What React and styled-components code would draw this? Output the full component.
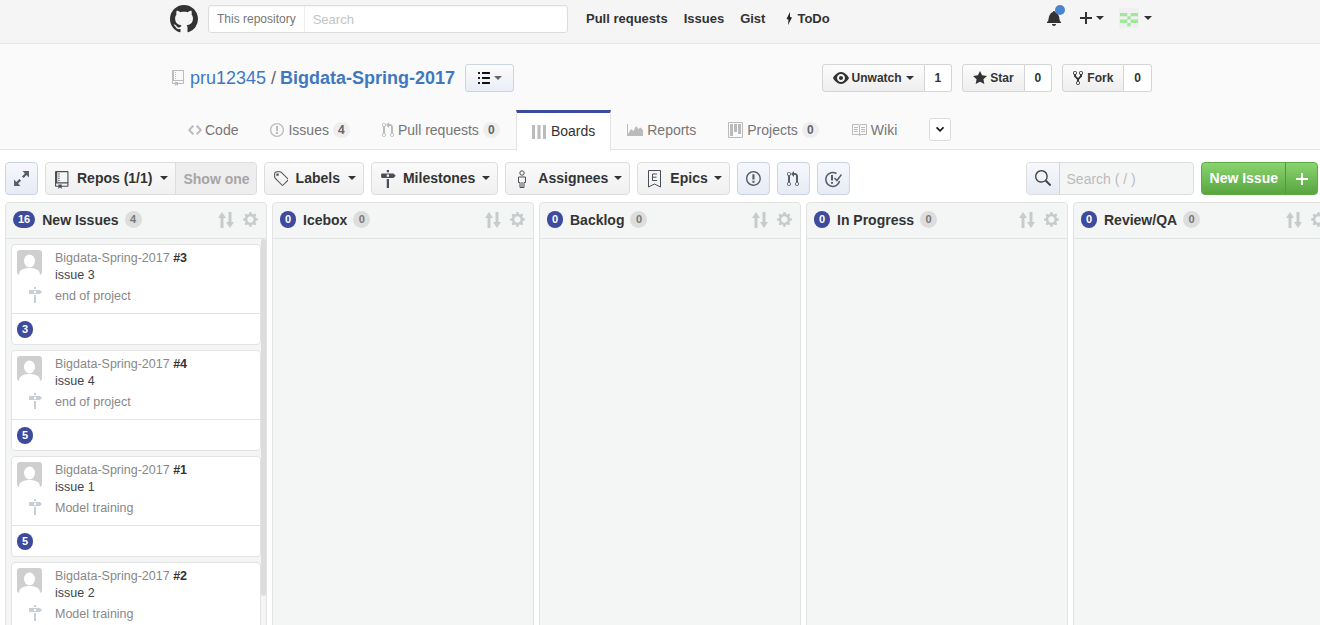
import React from "react";
import styled, { createGlobalStyle } from "styled-components";

const GlobalStyle = createGlobalStyle`
  html, body {
    margin: 0;
    height: 100%;
    overflow: hidden;
    background: #fff;
    font-family: "Liberation Sans", Arial, sans-serif;
    font-size: 14px;
    color: #333;
  }
  * { box-sizing: border-box; }
`;

const Oct = ({ d, w = 16, size = 16, color = "currentColor" }) => (
  <svg width={(w / 16) * size} height={size} viewBox={`0 0 ${w} 16`} fill={color} style={{ flex: "none", display: "block" }}>
    <path fillRule="evenodd" d={d} />
  </svg>
);

const P = {
  github: "M8 0C3.58 0 0 3.58 0 8c0 3.54 2.29 6.53 5.47 7.59.4.07.55-.17.55-.38 0-.19-.01-.82-.01-1.49-2.01.37-2.53-.49-2.69-.94-.09-.23-.48-.94-.82-1.13-.28-.15-.68-.52-.01-.53.63-.01 1.08.58 1.23.82.72 1.21 1.87.87 2.33.66.07-.52.28-.87.51-1.07-1.78-.2-3.64-.89-3.64-3.95 0-.87.31-1.59.82-2.15-.08-.2-.36-1.02.08-2.12 0 0 .67-.21 2.2.82.64-.18 1.32-.27 2-.27.68 0 1.36.09 2 .27 1.53-1.04 2.2-.82 2.2-.82.44 1.1.16 1.92.08 2.12.51.56.82 1.27.82 2.15 0 3.07-1.87 3.75-3.65 3.95.29.25.54.73.54 1.48 0 1.07-.01 1.93-.01 2.2 0 .21.15.46.55.38A8.013 8.013 0 0 0 16 8c0-4.42-3.58-8-8-8z",
  repo: "M4 9H3V8h1v1zm0-3H3v1h1V6zm0-2H3v1h1V4zm0-2H3v1h1V2zm8-1v12c0 .55-.45 1-1 1H6v2l-1.5-1.5L3 16v-2H1c-.55 0-1-.45-1-1V1c0-.55.45-1 1-1h10c.55 0 1 .45 1 1zm-1 10H1v2h2v-1h3v1h5v-2zm0-10H2v9h9V1z",
  eye: "M8.06 2C3 2 0 8 0 8s3 6 8.06 6C13 14 16 8 16 8s-3-6-7.94-6zM8 12c-2.2 0-4-1.78-4-4 0-2.2 1.8-4 4-4 2.22 0 4 1.8 4 4 0 2.22-1.78 4-4 4zm2-4c0 1.11-.89 2-2 2-1.11 0-2-.89-2-2 0-1.11.89-2 2-2 1.11 0 2 .89 2 2z",
  star: "M14 6l-4.9-.64L7 1 4.9 5.36 0 6l3.6 3.26L2.67 14 7 11.67 11.33 14l-.93-4.74L14 6z",
  fork: "M8 1a1.993 1.993 0 0 0-1 3.72V6L5 8 3 6V4.72A1.993 1.993 0 0 0 2 1a1.993 1.993 0 0 0-1 3.72V6.5l3 3v1.78A1.993 1.993 0 0 0 5 15a1.993 1.993 0 0 0 1-3.72V9.5l3-3V4.72A1.993 1.993 0 0 0 8 1zM2 4.2C1.34 4.2.8 3.65.8 3c0-.65.55-1.2 1.2-1.2.65 0 1.2.55 1.2 1.2 0 .65-.55 1.2-1.2 1.2zm3 10c-.66 0-1.2-.55-1.2-1.2 0-.65.55-1.2 1.2-1.2.65 0 1.2.55 1.2 1.2 0 .65-.55 1.2-1.2 1.2zm3-10c-.66 0-1.2-.55-1.2-1.2 0-.65.55-1.2 1.2-1.2.65 0 1.2.55 1.2 1.2 0 .65-.55 1.2-1.2 1.2z",
  code: "M9.5 3L8 4.5 11.5 8 8 11.5 9.5 13 14 8 9.5 3zm-5 0L0 8l4.5 5L6 11.5 2.5 8 6 4.5 4.5 3z",
  issue: "M7 2.3c3.14 0 5.7 2.56 5.7 5.7s-2.56 5.7-5.7 5.7A5.71 5.71 0 0 1 1.3 8c0-3.14 2.56-5.7 5.7-5.7zM7 1C3.14 1 0 4.14 0 8s3.14 7 7 7 7-3.14 7-7-3.14-7-7-7zm1 3H6v5h2V4zm0 6H6v2h2v-2z",
  pull: "M11 11.28V5c-.03-.78-.34-1.47-.94-2.06C9.46 2.35 8.78 2.03 8 2H7V0L4 3l3 3V4h1c.27.02.48.11.69.31.21.2.3.42.31.69v6.28A1.993 1.993 0 0 0 10 15a1.993 1.993 0 0 0 1-3.72zm-1 2.92c-.66 0-1.2-.55-1.2-1.2 0-.65.55-1.2 1.2-1.2.65 0 1.2.55 1.2 1.2 0 .65-.55 1.2-1.2 1.2zM4 3c0-1.11-.89-2-2-2a1.993 1.993 0 0 0-1 3.72v6.56A1.993 1.993 0 0 0 2 15a1.993 1.993 0 0 0 1-3.72V4.72c.59-.34 1-.98 1-1.72zm-.8 10c0 .66-.55 1.2-1.2 1.2-.65 0-1.2-.55-1.2-1.2 0-.65.55-1.2 1.2-1.2.65 0 1.2.55 1.2 1.2zM2 4.2C1.34 4.2.8 3.65.8 3c0-.65.55-1.2 1.2-1.2.65 0 1.2.55 1.2 1.2 0 .65-.55 1.2-1.2 1.2z",
  project: "M10 12h3V2h-3v10zm-4-2h3V2H6v8zm-4 4h3V2H2v12zm-1 1h13V1H1v14zM14 0H1a1 1 0 0 0-1 1v14a1 1 0 0 0 1 1h13a1 1 0 0 0 1-1V1a1 1 0 0 0-1-1z",
  bars: "M0 2h3v14H0zM5.500 2h3v14h-3zM11 2h3v14h-3z",
  book: "M3 5h4v1H3V5zm0 3h4V7H3v1zm0 2h4V9H3v1zm11-5h-4v1h4V5zm0 2h-4v1h4V7zm0 2h-4v1h4V9zm2-6v9c0 .55-.45 1-1 1H9.5l-1 1-1-1H2c-.55 0-1-.45-1-1V3c0-.55.45-1 1-1h5.500l1 1 1-1H15c.55 0 1 .45 1 1zm-8 .5L7.5 3H2v9h6V3.5zm7-.5H9.5l-.5.5V12h6V3z",
  reports: "M0 2h1v10l3-5 2.500 2L9 4l2.500 3 2-1.500L16 8v6H0z",
  milestone: "M8 2H6V0h2v2zm4 5H2c-.55 0-1-.45-1-1V4c0-.55.45-1 1-1h10l2 2-2 2zM8 4H6v2h2V4zM6 16h2V8H6v8z",
  tag: "M7.73 1.73C7.26 1.26 6.62 1 5.96 1H3.5C2.13 1 1 2.13 1 3.5v2.47c0 .66.27 1.3.73 1.77l6.06 6.06c.39.39 1.02.39 1.41 0l4.59-4.59a.996.996 0 0 0 0-1.41L7.73 1.73zM2.38 7.09c-.31-.3-.47-.7-.47-1.13V3.5c0-.88.72-1.59 1.59-1.59h2.47c.42 0 .83.16 1.13.47l6.14 6.13-4.73 4.73-6.13-6.15zM3.01 3h2v2H3V3h.01z",
  bell: "M14 12v1H0v-1l.73-.58c.77-.77.81-2.55 1.19-4.42C2.69 3.23 6 2 6 2c0-.55.45-1 1-1s1 .45 1 1c0 0 3.39 1.23 4.16 5 .38 1.88.42 3.66 1.19 4.42l.66.58H14zm-7 4c1.11 0 2-.89 2-2H5c0 1.11.89 2 2 2z",
  plus: "M12 9H7v5H5V9H0V7h5V2h2v5h5v2z",
  list: "M2 13c0 .59 0 1-.59 1H.59C0 14 0 13.59 0 13c0-.59 0-1 .59-1h.81c.59 0 .59.41.59 1H2zm2.59-9h6.81c.59 0 .59-.41.59-1 0-.59 0-1-.59-1H4.59C4 2 4 2.41 4 3c0 .59 0 1 .59 1zM1.41 7H.59C0 7 0 7.41 0 8c0 .59 0 1 .59 1h.81c.59 0 .59-.41.59-1 0-.59 0-1-.59-1h.01zm0-5H.59C0 2 0 2.41 0 3c0 .59 0 1 .59 1h.81c.59 0 .59-.41.59-1 0-.59 0-1-.59-1h.01zm10 5H4.59C4 7 4 7.41 4 8c0 .59 0 1 .59 1h6.81c.59 0 .59-.41.59-1 0-.59 0-1-.59-1h.01zm0 5H4.59C4 12 4 12.41 4 13c0 .59 0 1 .59 1h6.81c.59 0 .59-.41.59-1 0-.59 0-1-.59-1h.01z",
  gear: "M14 8.77v-1.6l-1.94-.64-.45-1.09.88-1.84-1.13-1.13-1.81.91-1.09-.45-.69-1.92h-1.6l-.63 1.94-1.11.45-1.84-.88-1.13 1.13.91 1.81-.45 1.09L0 7.23v1.59l1.94.64.45 1.09-.88 1.84 1.13 1.13 1.81-.91 1.09.45.69 1.92h1.59l.63-1.94 1.11-.45 1.84.88 1.13-1.13-.92-1.81.47-1.09L14 8.75v.02zM7 11c-1.66 0-3-1.34-3-3s1.34-3 3-3 3 1.34 3 3-1.34 3-3 3z",
  search: "M15.7 13.3l-3.81-3.83A5.93 5.93 0 0 0 13 6c0-3.31-2.69-6-6-6S1 2.69 1 6s2.69 6 6 6c1.3 0 2.48-.41 3.47-1.11l3.83 3.81c.19.2.45.3.7.3.25 0 .52-.09.7-.3a.996.996 0 0 0 0-1.41v.01zM7 10.7c-2.59 0-4.7-2.11-4.7-4.7 0-2.59 2.11-4.7 4.7-4.7 2.59 0 4.7 2.11 4.7 4.7 0 2.59-2.11 4.7-4.7 4.7z",
  expand: "M9 1h6v6l-2.200-2.200L10 7.600 8.400 6l2.800-2.800zM7 15H1V9l2.200 2.200L6 8.400 7.600 10l-2.800 2.800z",
  sort: "M4 0 8 6H5.500V16h-3V6H0zM12 16 16 10h-2.500V0h-3v10H8z",
  chevron: "M5 11L0 6l1.500-1.500L5 8.250 8.500 4.500 10 6z",
};

/* the zenhub icons have no octicon, these are stroked by hand */
const PersonIcon = () => (
  <svg width="10" height="18" viewBox="0 0 10 18" fill="none" stroke="currentColor" strokeWidth="1" style={{ display: "block" }}>
    <circle cx="5" cy="3" r="2.200" />
    <path d="M1.500 7h7v5.500H7V17.500H3V12.500H1.500zM5 12v5.500" />
  </svg>
);

const EpicIcon = () => (
  <svg width="13" height="18" viewBox="0 0 13 18" fill="none" stroke="currentColor" strokeWidth="1" style={{ display: "block" }}>
    <path d="M.5.5h12v16.500l-6-3-6 3z" />
    <path d="M9 4H4.500v6.500H9M4.500 7.200H8.500" />
  </svg>
);

const TimelineIcon = () => (
  <svg width="18" height="18" viewBox="0 0 18 18" fill="none" stroke="currentColor" strokeWidth="1.500" style={{ display: "block" }}>
    <path d="M12.500 3.500A7 7 0 1 0 15.600 11" />
    <path d="M8 5v5.500M8 12v1.800" strokeWidth="2" />
    <path d="M10.500 8l2.500 2.500 4.500-6" />
  </svg>
);

const Page = styled.div`
  height: 100vh;
  display: flex;
  flex-direction: column;
  overflow: hidden;
`;

/* github top bar */
const TopBar = styled.header`
  flex: none;
  height: 44px;
  background: #f5f5f5;
  border-bottom: 1px solid #e5e5e5;
  padding: 5px 168px 0 170px;
  display: flex;
  align-items: flex-start;
`;

const Logo = styled.a`
  color: #333;
  margin-right: 10px;
`;

const SearchBox = styled.div`
  width: 360px;
  height: 28px;
  display: flex;
  align-items: center;
  background: #fff;
  border: 1px solid #ddd;
  border-radius: 3px;
  font-size: 12px;
  box-shadow: inset 0 1px 2px rgba(0, 0, 0, 0.04);
`;

const Scope = styled.span`
  padding: 0 8px;
  height: 100%;
  line-height: 26px;
  color: #767676;
  border-right: 1px solid #eee;
`;

const SearchHint = styled.span`
  padding-left: 8px;
  font-size: 13px;
  color: #c4c4c4;
`;

const TopNav = styled.nav`
  margin-left: 18px;
  height: 26px;
  display: flex;
  align-items: center;
  gap: 16px;
  font-size: 13px;
  font-weight: 700;
  color: #333;
`;

const TodoLink = styled.span`
  margin-left: 4px;
  display: flex;
  align-items: center;
  gap: 4px;
`;

const TopRight = styled.div`
  margin-left: auto;
  height: 26px;
  display: flex;
  align-items: center;
`;

const BellWrap = styled.span`
  position: relative;
  margin-right: 19px;
`;

const BellDot = styled.span`
  position: absolute;
  top: -5px;
  right: -4px;
  width: 10px;
  height: 10px;
  border-radius: 50%;
  background: #4a85d0;
`;

const Caret = styled.span`
  display: inline-block;
  flex: none;
  width: 0;
  height: 0;
  margin-left: ${(p) => p.$ml ?? 4}px;
  border-top: 4px solid ${(p) => p.$color || "#333"};
  border-left: 4px solid transparent;
  border-right: 4px solid transparent;
`;

const Identicon = styled.span`
  display: block;
  width: 20px;
  height: 20px;
  margin-left: 15px;
`;

/* repo head */
const RepoHead = styled.section`
  flex: none;
  height: 106px;
  background: #fafafa;
  border-bottom: 1px solid #e5e5e5;
  padding: 0 168px 0 170px;
  display: flex;
  flex-direction: column;
`;

const TitleRow = styled.div`
  height: 66px;
  padding-top: 20px;
  display: flex;
  align-items: flex-start;
`;

const RepoTitle = styled.h1`
  margin: 0 0 0 2px;
  height: 28px;
  display: flex;
  align-items: center;
  font-size: 18px;
  font-weight: 400;
  color: #666;
  white-space: pre;
`;

const RepoIcon = styled.span`
  color: #bbb;
  margin-right: 6px;
`;

const RepoLink = styled.a`
  color: #4078c0;
  margin-left: ${(p) => (p.$strong ? -1 : 0)}px;
  font-weight: ${(p) => (p.$strong ? 700 : 400)};
`;

const ZenButton = styled.button`
  margin-left: 10px;
  width: 49px;
  height: 28px;
  padding: 0;
  display: flex;
  align-items: center;
  justify-content: center;
  color: #111;
  border: 1px solid #cdd5e2;
  border-radius: 3px;
  background: linear-gradient(#fcfcfd, #e9edf6);
`;

const RepoActions = styled.div`
  margin-left: auto;
  display: flex;
  gap: 10px;
`;

const ActionGroup = styled.div`
  height: 28px;
  display: flex;
  font-size: 12px;
  font-weight: 700;
  color: #333;
`;

const ActionButton = styled.span`
  display: flex;
  align-items: center;
  gap: ${(p) => p.$gap ?? 3}px;
  padding: 0 10px;
  background: linear-gradient(#fcfcfc, #eee);
  border: 1px solid #d5d5d5;
  border-radius: 3px 0 0 3px;
`;

const ActionCount = styled.span`
  display: flex;
  align-items: center;
  padding: 0 10px;
  background: #fff;
  border: 1px solid #d5d5d5;
  border-left: 0;
  border-radius: 0 3px 3px 0;
`;

const TabRow = styled.nav`
  height: 40px;
  margin: 0 0 -1px 2px;
  display: flex;
  align-items: flex-start;
`;

const Tab = styled.a`
  height: ${(p) => (p.$active ? 41 : 40)}px;
  display: flex;
  align-items: center;
  gap: 4px;
  padding: ${(p) => (p.$active ? "0 15px 3px 15px" : "0 16px")};
  font-size: 14px;
  color: ${(p) => (p.$active ? "#333" : "#767676")};
  background: ${(p) => (p.$active ? "#fff" : "transparent")};
  border-top: ${(p) => (p.$active ? "3px solid #3e4a9c" : "0")};
  border-left: ${(p) => (p.$active ? "1px solid #e5e5e5" : "0")};
  border-right: ${(p) => (p.$active ? "1px solid #e5e5e5" : "0")};
`;

const TabIcon = styled.span`
  color: #bbb;
  margin-right: ${(p) => p.$mr ?? 0}px;
`;

const Counter = styled.span`
  min-width: 17px;
  height: 16px;
  padding: 0 5px;
  border-radius: 8px;
  background: #eee;
  color: #666;
  font-size: 12px;
  font-weight: 700;
  line-height: 16px;
  text-align: center;
`;

const MoreButton = styled.span`
  margin: 8px 0 0 16px;
  width: 22px;
  height: 23px;
  display: flex;
  align-items: center;
  justify-content: center;
  color: #111;
  background: #fff;
  border: 1px solid #ddd;
  border-radius: 3px;
`;

/* zenhub toolbar */
const Toolbar = styled.div`
  flex: none;
  height: 52px;
  padding: 12px 2px 0 5px;
  display: flex;
  gap: 7px;
`;

const ToolButton = styled.div`
  height: 33px;
  display: flex;
  align-items: center;
  padding: 0 7px 2px 7px;
  font-size: 14px;
  font-weight: 700;
  color: #333;
  background: linear-gradient(#fafafa, #f0f0f0);
  border: 1px solid #ddd;
  border-radius: 4px;
`;

const ToolIcon = styled.span`
  color: #4a4f57;
  width: 18px;
  margin-top: 2px;
  margin-right: ${(p) => p.$mr ?? 6}px;
  display: flex;
  justify-content: center;
`;

const RepoGroup = styled(ToolButton)`
  padding: 0 0 0 7px;
`;

const RepoLabel = styled.span`
  margin-bottom: 2px;
`;

const RepoCaret = styled(Caret)`
  margin-bottom: 2px;
`;

const ShowOne = styled.span`
  height: 100%;
  margin-left: 7px;
  padding: 1px 6px 0 7px;
  display: flex;
  align-items: center;
  color: #a6a6a6;
  background: #eee;
  border-left: 1px solid #ddd;
  border-radius: 0 3px 3px 0;
`;

const SquareButton = styled.div`
  width: 33px;
  height: 33px;
  display: flex;
  align-items: center;
  justify-content: center;
  color: #555d6b;
  background: linear-gradient(#f6f8fc, #e6ebf5);
  border: 1px solid #cbd4e4;
  border-radius: 4px;
`;

const BoardSearch = styled.div`
  margin-left: auto;
  width: 168px;
  height: 33px;
  display: flex;
  background: #f4f5f5;
  border: 1px solid #ddd;
  border-radius: 4px;
`;

const SearchIconBox = styled.span`
  width: 33px;
  display: flex;
  align-items: center;
  justify-content: center;
  color: #444;
  background: linear-gradient(#f6f8fc, #e6ebf5);
  border-right: 1px solid #cbd4e4;
  border-radius: 3px 0 0 3px;
`;

const BoardSearchHint = styled.span`
  padding-left: 7px;
  line-height: 32px;
  color: #bbb;
`;

const NewIssue = styled.div`
  height: 33px;
  display: flex;
  font-size: 14px;
  font-weight: 700;
  color: #fff;
  background: linear-gradient(#8ad46f, #58a541);
  border: 1px solid #5cab45;
  border-radius: 4px;
`;

const NewIssueLabel = styled.span`
  padding: 0 7px 0 8px;
  line-height: 30px;
  border-right: 1px solid #4f9a3a;
`;

const NewIssuePlus = styled.span`
  width: 31px;
  display: flex;
  align-items: center;
  justify-content: center;
`;

/* board */
const Board = styled.main`
  flex: 1;
  min-height: 0;
  padding-left: 5px;
  display: flex;
  gap: 5px;
  overflow: hidden;
`;

const Column = styled.section`
  position: relative;
  flex: none;
  width: 262px;
  height: 424px;
  background: #f4f5f5;
  border: 1px solid #e2e4e4;
  border-radius: 4px 4px 0 0;
  overflow: hidden;
`;

const ColumnHead = styled.header`
  height: 36px;
  padding: 0 8px 2px 7px;
  display: flex;
  align-items: center;
  border-bottom: 1px solid #e2e4e4;
`;

const Pill = styled.span`
  display: inline-block;
  flex: none;
  min-width: 16px;
  height: 17px;
  padding: 0 ${(p) => (p.$wide ? 5 : 0)}px;
  border-radius: 9px;
  background: #3e4a9c;
  color: #fff;
  font-size: 11px;
  font-weight: 700;
  line-height: 17px;
  text-align: center;
`;

const ColumnTitle = styled.h3`
  margin: 0 6px 0 7px;
  font-size: 14px;
  font-weight: 700;
  color: #333;
`;

const ColumnCount = styled.span`
  min-width: 17px;
  height: 17px;
  border-radius: 50%;
  background: #ddd;
  color: #777;
  font-size: 11px;
  font-weight: 700;
  line-height: 17px;
  text-align: center;
`;

const HeadTools = styled.span`
  margin-left: auto;
  display: flex;
  align-items: center;
  gap: 9px;
  color: #c6cccc;
`;

const CardList = styled.div`
  padding: 5px 0 0 5px;
  display: flex;
  flex-direction: column;
  gap: 5px;
`;

const ScrollThumb = styled.span`
  position: absolute;
  top: 36px;
  left: 255px;
  width: 5px;
  height: 357px;
  background: #dcdcdc;
  border-radius: 3px;
`;

const Card = styled.article`
  flex: none;
  width: 250px;
  height: 101px;
  background: #fff;
  border: 1px solid #e3e3e3;
  border-radius: 4px;
`;

const CardBody = styled.div`
  height: 69px;
  padding: 5px;
  display: flex;
  border-bottom: 1px solid #e3e3e3;
`;

const AvatarCol = styled.div`
  width: 25px;
  margin-right: 13px;
  display: flex;
  flex-direction: column;
  color: #c8ced6;
`;

const Avatar = styled.svg`
  display: block;
  flex: none;
  width: 25px;
  height: 25px;
  margin-bottom: 12px;
  border-radius: 3px;
`;

const MilestoneMark = styled.span`
  margin-left: 11px;
`;

const CardText = styled.div`
  padding-top: 1px;
  font-size: 12.5px;
  color: #888;
`;

const CardRepo = styled.div`
  height: 15px;
  line-height: 15px;
`;

const IssueNumber = styled.b`
  color: #333;
`;

const IssueName = styled.div`
  margin-top: 2px;
  height: 15px;
  line-height: 15px;
  color: #444;
`;

const CardMilestone = styled.div`
  margin-top: 6px;
  height: 15px;
  line-height: 15px;
`;

const CardFoot = styled.div`
  height: 30px;
  padding: 6px 5px 0;
`;

const issues = [
  { num: 3, title: "issue 3", milestone: "end of project", points: 3 },
  { num: 4, title: "issue 4", milestone: "end of project", points: 5 },
  { num: 1, title: "issue 1", milestone: "Model training", points: 5 },
  { num: 2, title: "issue 2", milestone: "Model training", points: 5 },
];

const columns = [
  { name: "New Issues", points: 16, count: 4, cards: issues },
  { name: "Icebox", points: 0, count: 0 },
  { name: "Backlog", points: 0, count: 0 },
  { name: "In Progress", points: 0, count: 0 },
  { name: "Review/QA", points: 0, count: 0 },
];

const AvatarImage = () => (
  <Avatar viewBox="0 0 25 25">
    <rect width="25" height="25" fill="#cfcfcf" />
    <ellipse cx="12.5" cy="11" rx="5.5" ry="6.500" fill="#fff" />
    <path d="M2 25c0-5 4-7 10.500-7S23 20 23 25z" fill="#fff" />
  </Avatar>
);

const IssueCard = ({ issue }) => (
  <Card>
    <CardBody>
      <AvatarCol>
        <AvatarImage />
        <MilestoneMark><Oct d={P.milestone} w={14} /></MilestoneMark>
      </AvatarCol>
      <CardText>
        <CardRepo>
          Bigdata-Spring-2017 <IssueNumber>#{issue.num}</IssueNumber>
        </CardRepo>
        <IssueName>{issue.title}</IssueName>
        <CardMilestone>{issue.milestone}</CardMilestone>
      </CardText>
    </CardBody>
    <CardFoot>
      <Pill>{issue.points}</Pill>
    </CardFoot>
  </Card>
);

const BoardColumn = ({ column }) => (
  <Column>
    <ColumnHead>
      <Pill $wide={column.points > 9}>{column.points}</Pill>
      <ColumnTitle>{column.name}</ColumnTitle>
      <ColumnCount>{column.count}</ColumnCount>
      <HeadTools>
        <Oct d={P.sort} />
        <Oct d={P.gear} w={14} size={17} />
      </HeadTools>
    </ColumnHead>
    {column.cards && (
      <CardList>
        {column.cards.map((issue) => (
          <IssueCard key={issue.num} issue={issue} />
        ))}
      </CardList>
    )}
    {column.cards && <ScrollThumb />}
  </Column>
);

const App = () => (
  <Page>
    <GlobalStyle />
    <TopBar>
      <Logo><Oct d={P.github} size={28} /></Logo>
      <SearchBox>
        <Scope>This repository</Scope>
        <SearchHint>Search</SearchHint>
      </SearchBox>
      <TopNav>
        <span>Pull requests</span>
        <span>Issues</span>
        <span>Gist</span>
        <TodoLink>
          <svg width="8" height="13" viewBox="0 0 8 13" fill="#222"><path d="M5 0 1.500 7l2 .5L3 13l4-7.500-2-.5z" /></svg>
          ToDo
        </TodoLink>
      </TopNav>
      <TopRight>
        <BellWrap>
          <Oct d={P.bell} w={14} />
          <BellDot />
        </BellWrap>
        <Oct d={P.plus} w={12} />
        <Caret />
        <Identicon>
          <svg width="20" height="20" viewBox="0 0 20 20" style={{ display: "block" }}>
            <rect width="20" height="20" fill="#f0f0f0" />
            <path d="M1 5h7.300v3.300H1zM11.700 5H19v3.300h-7.300zM8.300 8.300h3.400v3.300H8.300zM1 11.600h7.300V15H1zM11.700 11.600H19V15h-7.300zM8.300 15h3.400v3.300H8.300z" fill="#9fe89a" />
          </svg>
        </Identicon>
        <Caret $ml={5} />
      </TopRight>
    </TopBar>

    <RepoHead>
      <TitleRow>
        <RepoTitle>
          <RepoIcon><Oct d={P.repo} w={12} size={16} /></RepoIcon>
          <RepoLink>pru12345</RepoLink>
          {" / "}
          <RepoLink $strong>Bigdata-Spring-2017</RepoLink>
        </RepoTitle>
        <ZenButton>
          <Oct d={P.list} w={12} size={16} />
          <Caret $color="#666" />
        </ZenButton>
        <RepoActions>
          <ActionGroup>
            <ActionButton>
              <Oct d={P.eye} />
              Unwatch
              <Caret $ml={1} />
            </ActionButton>
            <ActionCount>1</ActionCount>
          </ActionGroup>
          <ActionGroup>
            <ActionButton>
              <Oct d={P.star} w={14} />
              Star
            </ActionButton>
            <ActionCount>0</ActionCount>
          </ActionGroup>
          <ActionGroup>
            <ActionButton $gap={4}>
              <Oct d={P.fork} w={10} />
              Fork
            </ActionButton>
            <ActionCount>0</ActionCount>
          </ActionGroup>
        </RepoActions>
      </TitleRow>
      <TabRow>
        <Tab><TabIcon $mr={-1}><Oct d={P.code} w={14} /></TabIcon>Code</Tab>
        <Tab><TabIcon><Oct d={P.issue} w={14} /></TabIcon>Issues<Counter>4</Counter></Tab>
        <Tab><TabIcon><Oct d={P.pull} w={12} /></TabIcon>Pull requests<Counter>0</Counter></Tab>
        <Tab $active><TabIcon $mr={1}><Oct d={P.bars} w={14} /></TabIcon>Boards</Tab>
        <Tab><TabIcon><Oct d={P.reports} /></TabIcon>Reports</Tab>
        <Tab><TabIcon><Oct d={P.project} w={15} /></TabIcon>Projects<Counter>0</Counter></Tab>
        <Tab><TabIcon><Oct d={P.book} /></TabIcon>Wiki</Tab>
        <MoreButton><Oct d={P.chevron} w={10} size={13} /></MoreButton>
      </TabRow>
    </RepoHead>

    <Toolbar>
      <SquareButton><Oct d={P.expand} size={17} /></SquareButton>
      <RepoGroup>
        <ToolIcon><Oct d={P.repo} w={12} size={18} /></ToolIcon>
        <RepoLabel>Repos (1/1)</RepoLabel>
        <RepoCaret $ml={8} />
        <ShowOne>Show one</ShowOne>
      </RepoGroup>
      <ToolButton>
        <ToolIcon><Oct d={P.tag} w={14} size={18} /></ToolIcon>
        Labels
        <Caret $ml={8} />
      </ToolButton>
      <ToolButton>
        <ToolIcon><Oct d={P.milestone} w={14} size={18} /></ToolIcon>
        Milestones
        <Caret $ml={7} />
      </ToolButton>
      <ToolButton>
        <ToolIcon $mr={7}><PersonIcon /></ToolIcon>
        Assignees
        <Caret $ml={6} />
      </ToolButton>
      <ToolButton>
        <ToolIcon $mr={7}><EpicIcon /></ToolIcon>
        Epics
        <Caret $ml={6} />
      </ToolButton>
      <SquareButton><Oct d={P.issue} w={14} size={17} /></SquareButton>
      <SquareButton><Oct d={P.pull} w={12} size={16} /></SquareButton>
      <SquareButton><TimelineIcon /></SquareButton>
      <BoardSearch>
        <SearchIconBox><Oct d={P.search} size={17} /></SearchIconBox>
        <BoardSearchHint>Search ( / )</BoardSearchHint>
      </BoardSearch>
      <NewIssue>
        <NewIssueLabel>New Issue</NewIssueLabel>
        <NewIssuePlus><Oct d={P.plus} w={12} size={16} /></NewIssuePlus>
      </NewIssue>
    </Toolbar>

    <Board>
      {columns.map((column) => (
        <BoardColumn key={column.name} column={column} />
      ))}
    </Board>
  </Page>
);

export default App;
